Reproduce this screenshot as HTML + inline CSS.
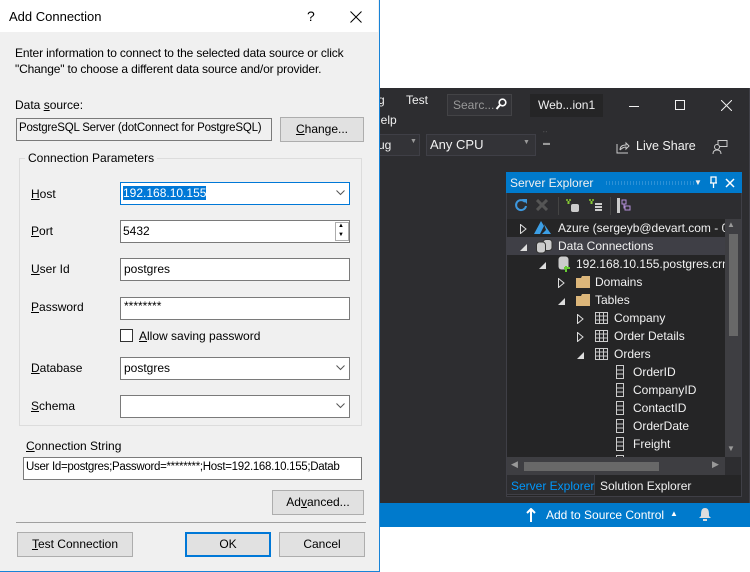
<!DOCTYPE html>
<html><head><meta charset="utf-8"><style>
*{box-sizing:border-box;margin:0;padding:0}
body{width:750px;height:571px;position:relative;overflow:hidden;background:#fff;font-family:"Liberation Sans",sans-serif;font-size:12px;color:#000}
.a{position:absolute;white-space:nowrap}
.vs{position:absolute;left:378px;top:88px;width:372px;height:439px;background:#2d2d30;color:#f1f1f1;border-right:1px solid #3f3f46}
.vs .a{color:#f1f1f1}
.dlg{position:absolute;left:-1px;top:-1px;width:381px;height:573px;background:#f0f0f0;border:1px solid #1883d7}
.tb{position:absolute;left:0;top:0;width:378px;height:32px;background:#fff}
.in{position:absolute;background:#fff;border:1px solid #7a7a7a;height:23px;padding:3px 3px;font-size:12px;white-space:nowrap;overflow:hidden}
.btn{position:absolute;background:#e1e1e1;border:1px solid #adadad;text-align:center;line-height:22px;font-size:12px;white-space:nowrap}
u{text-decoration:underline}
.row{position:absolute;left:0;height:18px;width:218px;line-height:18px}
</style></head><body>

<div class="vs">
 <div class="a" style="left:0;top:5px">g</div>
 <div class="a" style="left:28px;top:5px">Test</div>
 <div class="a" style="left:-6px;top:25px">Help</div>
 <div style="position:absolute;left:69px;top:6px;width:65px;height:22px;border:1px solid #434346;background:#333337"></div>
 <div class="a" style="left:75px;top:10px;color:#999">Searc...</div>
 <svg class="a" style="left:117px;top:10px" width="12" height="13"><circle cx="7.5" cy="4.5" r="3.3" fill="none" stroke="#fff" stroke-width="1.6"/><path d="M5 7 L1.5 11" stroke="#fff" stroke-width="2"/></svg>
 <div style="position:absolute;left:152px;top:6px;width:73px;height:23px;background:#252526"></div>
 <div class="a" style="left:160px;top:10px">Web...ion1</div>
 <div style="position:absolute;left:251px;top:18px;width:10px;height:1px;background:#f1f1f1"></div>
 <div style="position:absolute;left:297px;top:12px;width:10px;height:10px;border:1px solid #f1f1f1"></div>
 <svg class="a" style="left:343px;top:12px" width="11" height="11"><path d="M0 0L11 11M11 0L0 11" stroke="#f1f1f1"/></svg>
 <div style="position:absolute;left:0;top:46px;width:42px;height:22px;border:1px solid #3f3f46;border-left:none;background:#333337"></div>
 <div class="a" style="left:0;top:50px">ug</div>
 <div class="a" style="left:32px;top:50px;font-size:7px;color:#999">▼</div>
 <div style="position:absolute;left:48px;top:46px;width:110px;height:22px;border:1px solid #3f3f46;background:#333337"></div>
 <div class="a" style="left:52px;top:49px;font-size:13px">Any CPU</div>
 <div class="a" style="left:145px;top:51px;font-size:7px;color:#999">▼</div>
 <div class="a" style="left:165px;top:44px;font-size:7px;color:#999;line-height:8px">˙˙<br>▬</div>
 <svg class="a" style="left:238px;top:52px" width="14" height="14"><path d="M1 4V13H12M4 10C4 6 7 5 10 5V3L13 6L10 9V7C8 7 6 8 4 10" fill="none" stroke="#ccc"/></svg>
 <div class="a" style="left:258px;top:51px;font-size:12.5px">Live Share</div>
 <svg class="a" style="left:334px;top:52px" width="16" height="14"><rect x="6" y="0.5" width="9" height="6" fill="none" stroke="#ccc"/><circle cx="5" cy="7" r="2.5" fill="#2d2d30" stroke="#ccc"/><path d="M1 14C1 11 3 10 5 10C7 10 9 11 9 14" fill="none" stroke="#ccc"/></svg>

 <div style="position:absolute;left:128px;top:84px;width:236px;height:325px;border:1px solid #3f3f46;background:#252526"></div>
 <div style="position:absolute;left:128px;top:84px;width:236px;height:21px;background:#007acc"></div>
 <div class="a" style="left:132px;top:88px">Server Explorer</div>
 <div style="position:absolute;left:227px;top:93px;width:90px;height:4px;background-image:radial-gradient(#5aa8e0 0.6px,transparent 0.8px);background-size:3px 2px"></div>
 <div class="a" style="left:316px;top:90px;font-size:8px">▼</div>
 <svg class="a" style="left:331px;top:88px" width="9" height="12"><path d="M2 1H7V7H2ZM1 7H8M4.5 7V12" fill="none" stroke="#fff" stroke-width="1.3"/></svg>
 <svg class="a" style="left:347px;top:90px" width="10" height="10"><path d="M1 1L9 9M9 1L1 9" stroke="#fff" stroke-width="1.5"/></svg>
 <div style="position:absolute;left:129px;top:105px;width:234px;height:26px;background:#2d2d30"></div>
 <svg class="a" style="left:136px;top:110px" width="14" height="14"><path d="M11 4A5 5 0 1 0 12 8" fill="none" stroke="#3d97dd" stroke-width="2"/><path d="M8 1H13V6Z" fill="#3d97dd"/></svg>
 <svg class="a" style="left:158px;top:111px" width="12" height="12"><path d="M1 1L11 11M11 1L1 11" stroke="#555" stroke-width="3"/></svg>
 <div style="position:absolute;left:180px;top:109px;width:1px;height:18px;background:#444"></div>
 <svg class="a" style="left:186px;top:110px" width="16" height="15"><circle cx="3" cy="2" r="1" fill="#8c3"/><circle cx="6" cy="2" r="1" fill="#8c3"/><path d="M4.5 3V6" stroke="#8c3" stroke-width="2"/><rect x="7" y="6" width="8" height="8" rx="2" fill="#ccc"/></svg>
 <svg class="a" style="left:209px;top:110px" width="16" height="15"><circle cx="3" cy="2" r="1" fill="#8c3"/><circle cx="6" cy="2" r="1" fill="#8c3"/><path d="M4.5 3V6" stroke="#8c3" stroke-width="2"/><path d="M8 6H15M8 9H15M8 12H15" stroke="#ccc" stroke-width="2"/></svg>
 <div style="position:absolute;left:232px;top:109px;width:1px;height:18px;background:#444"></div>
 <svg class="a" style="left:239px;top:110px" width="16" height="15"><rect x="0" y="0" width="3" height="15" fill="#ccc"/><path d="M5 2H9V6H5ZM8 8H13V12H8ZM7 6V10H8" fill="none" stroke="#b48ed8"/></svg>

 <div style="position:absolute;left:129px;top:131px;width:218px;height:238px;overflow:hidden">
  <div class="row" style="top:0"><svg class="a" style="left:13px;top:5px" width="7" height="10"><path d="M0.5 0.5V9.5L6 5Z" fill="none" stroke="#ddd"/></svg><svg class="a" style="left:27px;top:2px" width="17" height="14"><path d="M7 0L0 13H6L10 5Z M10 3L17 13H8L12 9Z" fill="#3c9fe6"/></svg><span class="a" style="left:51px">Azure (sergeyb@devart.com - 0</span></div>
  <div class="row" style="top:18px;background:#3f3f46"><svg class="a" style="left:13px;top:7px" width="7" height="7"><path d="M7 0V7H0Z" fill="#ddd"/></svg><svg class="a" style="left:29px;top:2px" width="17" height="15"><rect x="7" y="0.5" width="9" height="11" rx="3" fill="#ccc" stroke="#333"/><rect x="0.5" y="3" width="9" height="11" rx="3" fill="#ccc" stroke="#333"/></svg><span class="a" style="left:51px">Data Connections</span></div>
  <div class="row" style="top:36px"><svg class="a" style="left:32px;top:7px" width="7" height="7"><path d="M7 0V7H0Z" fill="#ddd"/></svg><svg class="a" style="left:51px;top:1px" width="13" height="16"><rect x="0.5" y="0.5" width="10" height="13" rx="3" fill="#ccc"/><path d="M8 10V16M6 12H12" stroke="#6c3" stroke-width="2"/></svg><span class="a" style="left:69px">192.168.10.155.postgres.crm</span></div>
  <div class="row" style="top:54px"><svg class="a" style="left:51px;top:5px" width="7" height="10"><path d="M0.5 0.5V9.5L6 5Z" fill="none" stroke="#ddd"/></svg><svg class="a" style="left:69px;top:3px" width="14" height="12"><path d="M0 2H5L6 0H14V12H0Z" fill="#dcb67a"/></svg><span class="a" style="left:88px">Domains</span></div>
  <div class="row" style="top:72px"><svg class="a" style="left:51px;top:7px" width="7" height="7"><path d="M7 0V7H0Z" fill="#ddd"/></svg><svg class="a" style="left:69px;top:3px" width="14" height="12"><path d="M0 2H5L6 0H14V12H0Z" fill="#dcb67a"/></svg><span class="a" style="left:88px">Tables</span></div>
  <div class="row" style="top:90px"><svg class="a" style="left:70px;top:5px" width="7" height="10"><path d="M0.5 0.5V9.5L6 5Z" fill="none" stroke="#ddd"/></svg><svg class="a" style="left:88px;top:3px" width="13" height="12"><path d="M0.5 0.5H12.5V11.5H0.5ZM0.5 4H12.5M0.5 8H12.5M4.5 0.5V11.5M8.5 0.5V11.5" fill="none" stroke="#ccc"/></svg><span class="a" style="left:107px">Company</span></div>
  <div class="row" style="top:108px"><svg class="a" style="left:70px;top:5px" width="7" height="10"><path d="M0.5 0.5V9.5L6 5Z" fill="none" stroke="#ddd"/></svg><svg class="a" style="left:88px;top:3px" width="13" height="12"><path d="M0.5 0.5H12.5V11.5H0.5ZM0.5 4H12.5M0.5 8H12.5M4.5 0.5V11.5M8.5 0.5V11.5" fill="none" stroke="#ccc"/></svg><span class="a" style="left:107px">Order Details</span></div>
  <div class="row" style="top:126px"><svg class="a" style="left:70px;top:7px" width="7" height="7"><path d="M7 0V7H0Z" fill="#ddd"/></svg><svg class="a" style="left:88px;top:3px" width="13" height="12"><path d="M0.5 0.5H12.5V11.5H0.5ZM0.5 4H12.5M0.5 8H12.5M4.5 0.5V11.5M8.5 0.5V11.5" fill="none" stroke="#ccc"/></svg><span class="a" style="left:107px">Orders</span></div>
  <div class="row" style="top:144px"><svg class="a" style="left:109px;top:2px" width="8" height="14"><path d="M0.5 0.5H7.5V13.5H0.5ZM0.5 5H7.5M0.5 9H7.5" fill="none" stroke="#ccc"/></svg><span class="a" style="left:126px">OrderID</span></div>
  <div class="row" style="top:162px"><svg class="a" style="left:109px;top:2px" width="8" height="14"><path d="M0.5 0.5H7.5V13.5H0.5ZM0.5 5H7.5M0.5 9H7.5" fill="none" stroke="#ccc"/></svg><span class="a" style="left:126px">CompanyID</span></div>
  <div class="row" style="top:180px"><svg class="a" style="left:109px;top:2px" width="8" height="14"><path d="M0.5 0.5H7.5V13.5H0.5ZM0.5 5H7.5M0.5 9H7.5" fill="none" stroke="#ccc"/></svg><span class="a" style="left:126px">ContactID</span></div>
  <div class="row" style="top:198px"><svg class="a" style="left:109px;top:2px" width="8" height="14"><path d="M0.5 0.5H7.5V13.5H0.5ZM0.5 5H7.5M0.5 9H7.5" fill="none" stroke="#ccc"/></svg><span class="a" style="left:126px">OrderDate</span></div>
  <div class="row" style="top:216px"><svg class="a" style="left:109px;top:2px" width="8" height="14"><path d="M0.5 0.5H7.5V13.5H0.5ZM0.5 5H7.5M0.5 9H7.5" fill="none" stroke="#ccc"/></svg><span class="a" style="left:126px">Freight</span></div>
  <div class="row" style="top:234px"><svg class="a" style="left:109px;top:2px" width="8" height="14"><path d="M0.5 0.5H7.5V13.5H0.5Z" fill="none" stroke="#ccc"/></svg></div>
 </div>
 <div style="position:absolute;left:347px;top:131px;width:16px;height:238px;background:#3e3e42"></div>
 <div style="position:absolute;left:351px;top:146px;width:9px;height:102px;background:#686868"></div>
 <div class="a" style="left:349px;top:132px;font-size:8px;color:#999">▲</div>
 <div class="a" style="left:349px;top:356px;font-size:8px;color:#999">▼</div>
 <div style="position:absolute;left:129px;top:369px;width:218px;height:18px;background:#3e3e42"></div>
 <div style="position:absolute;left:146px;top:374px;width:135px;height:9px;background:#686868"></div>
 <div class="a" style="left:133px;top:371px;font-size:9px;color:#999">◀</div>
 <div class="a" style="left:334px;top:371px;font-size:9px;color:#999">▶</div>
 <div style="position:absolute;left:347px;top:369px;width:16px;height:18px;background:#2d2d30"></div>
 <div style="position:absolute;left:128px;top:387px;width:89px;height:20px;border:1px solid #3f3f46;border-top:none;background:#2d2d30"></div>
 <div class="a" style="left:133px;top:391px;color:#0097fb">Server Explorer</div>
 <div class="a" style="left:222px;top:391px">Solution Explorer</div>
 <div style="position:absolute;left:0;top:415px;width:372px;height:24px;background:#007acc"></div>
 <svg class="a" style="left:148px;top:420px" width="10" height="14"><path d="M5 1V14M1 5L5 1L9 5" fill="none" stroke="#fff" stroke-width="2"/></svg>
 <div class="a" style="left:168px;top:420px;font-size:12px;color:#fff">Add to Source Control</div>
 <div class="a" style="left:292px;top:421px;font-size:8px;color:#fff">▲</div>
 <svg class="a" style="left:320px;top:419px" width="14" height="15"><path d="M7 1C3 1 3 5 3 9L1 11H13L11 9C11 5 11 1 7 1ZM5 12H9V14H5Z" fill="#ddd"/></svg>
</div>

<div class="dlg">
 <div class="tb"></div>
 <div class="a" style="left:9px;top:9px;font-size:13px">Add Connection</div>
 <div class="a" style="left:307px;top:8px;font-size:14px">?</div>
 <svg class="a" style="left:350px;top:11px" width="12" height="12"><path d="M0.5 0.5L11.5 11.5M11.5 0.5L0.5 11.5" stroke="#000"/></svg>
 <div class="a" style="left:15px;top:46px;letter-spacing:-0.15px">Enter information to connect to the selected data source or click</div>
 <div class="a" style="left:15px;top:62px;letter-spacing:-0.15px">"Change" to choose a different data source and/or provider.</div>
 <div class="a" style="left:15px;top:98px">Data <u>s</u>ource:</div>
 <div class="in" style="left:16px;top:118px;width:256px;background:#f0f0f0;padding:3px 2px;font-size:11.5px;letter-spacing:-0.2px">PostgreSQL Server (dotConnect for PostgreSQL)</div>
 <div class="btn" style="left:280px;top:117px;width:84px;height:25px"><u>C</u>hange...</div>
 <div style="position:absolute;left:19px;top:158px;width:343px;height:268px;border:1px solid #dcdcdc"></div>
 <div class="a" style="left:25px;top:151px;background:#f0f0f0;padding:0 3px">Connection Parameters</div>

 <div class="a" style="left:31px;top:187px"><u>H</u>ost</div>
 <div class="in" style="left:120px;top:182px;width:230px;border-color:#0078d7;padding:3px 2px"><span style="background:#0078d7;color:#fff">192.168.10.155</span></div>
 <svg class="a" style="left:336px;top:190px" width="9" height="6"><path d="M0.5 0.5L4.5 4.5L8.5 0.5" fill="none" stroke="#555"/></svg>

 <div class="a" style="left:31px;top:224px"><u>P</u>ort</div>
 <div class="in" style="left:120px;top:220px;width:230px;padding:3px 2px">5432</div>
 <div style="position:absolute;left:335px;top:222px;width:14px;height:19px;border:1px solid #adadad;background:#fff"></div>
 <div class="a" style="left:338px;top:223px;font-size:6px">▲</div>
 <div class="a" style="left:338px;top:232px;font-size:6px">▼</div>

 <div class="a" style="left:31px;top:262px"><u>U</u>ser Id</div>
 <div class="in" style="left:120px;top:258px;width:230px">postgres</div>
 <div class="a" style="left:31px;top:300px"><u>P</u>assword</div>
 <div class="in" style="left:120px;top:297px;width:230px;padding-top:1px">********</div>
 <div style="position:absolute;left:120px;top:329px;width:13px;height:13px;border:1px solid #333;background:#fff"></div>
 <div class="a" style="left:139px;top:329px"><u>A</u>llow saving password</div>
 <div class="a" style="left:31px;top:361px"><u>D</u>atabase</div>
 <div class="in" style="left:120px;top:357px;width:230px">postgres</div>
 <svg class="a" style="left:336px;top:365px" width="9" height="6"><path d="M0.5 0.5L4.5 4.5L8.5 0.5" fill="none" stroke="#555"/></svg>
 <div class="a" style="left:31px;top:399px"><u>S</u>chema</div>
 <div class="in" style="left:120px;top:395px;width:230px"></div>
 <svg class="a" style="left:336px;top:403px" width="9" height="6"><path d="M0.5 0.5L4.5 4.5L8.5 0.5" fill="none" stroke="#555"/></svg>

 <div class="a" style="left:26px;top:439px"><u>C</u>onnection String</div>
 <div class="in" style="left:23px;top:457px;width:339px;padding:3px 2px;font-size:11.5px;letter-spacing:-0.3px">User Id=postgres;Password=********;Host=192.168.10.155;Datab</div>
 <div class="btn" style="left:272px;top:490px;width:92px;height:25px">Ad<u>v</u>anced...</div>
 <div style="position:absolute;left:16px;top:522px;width:350px;height:1px;background:#a0a0a0"></div>
 <div class="btn" style="left:17px;top:532px;width:116px;height:25px"><u>T</u>est Connection</div>
 <div class="btn" style="left:185px;top:532px;width:86px;height:25px;border:2px solid #0078d7;line-height:21px">OK</div>
 <div class="btn" style="left:279px;top:532px;width:86px;height:25px">Cancel</div>
</div>
</body></html>
